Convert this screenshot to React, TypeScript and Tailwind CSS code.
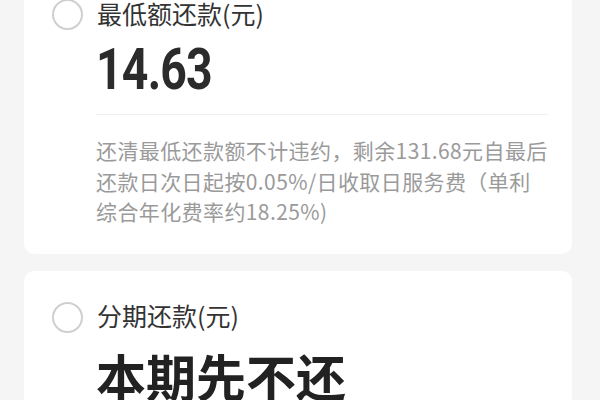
export default function App() {
  return (
    <div
      className="h-[400px] w-[600px] overflow-hidden bg-[#f5f5f5]"
      style={{ fontFamily: '"Noto Sans CJK SC", "Noto Sans", sans-serif' }}
    >
      <div className="ml-[24px] mr-[28px] flex flex-col gap-[17px]">
        <section className="-mt-[32px] rounded-[10px] bg-white pb-[27px] pl-[28px] pr-[20px] pt-[31px]">
          <RadioRow label="最低额还款(元)" />
          <div
            className="mt-[10px] origin-left scale-x-[0.8] pl-[55px] text-[58px] font-bold leading-none tracking-[-1px] text-[#2b2b2b]"
            style={{ fontFamily: "Roboto, sans-serif" }}
          >
            14.63
          </div>
          <div className="ml-[44px] mr-[4px] mt-[16px] h-px bg-[#efefef]" />
          <p className="mt-[20px] pl-[44px] text-[21px] leading-[30.5px] tracking-[0.4px] text-[#9a9a9a]">
            还清最低还款额不计违约，剩余131.68元自最后
            <br />
            还款日次日起按0.05%/日收取日服务费（单利
            <br />
            综合年化费率约18.25%)
          </p>
        </section>

        <section className="rounded-[10px] bg-white pb-[40px] pl-[28px] pr-[24px] pt-[31px]">
          <RadioRow label="分期还款(元)" />
          <div className="mt-[17px] pl-[44px] text-[50px] font-bold leading-none text-[#222]">
            本期先不还
          </div>
        </section>
      </div>
    </div>
  );
}

function RadioRow({ label }: { label: string }) {
  return (
    <div className="flex items-center gap-[14px]">
      <span className="box-border h-[31px] w-[31px] shrink-0 rounded-full border-2 border-[#cfcfcf] bg-white" />
      <span className="-mt-[3px] text-[25px] leading-[31px] text-[#333]">{label}</span>
    </div>
  );
}
